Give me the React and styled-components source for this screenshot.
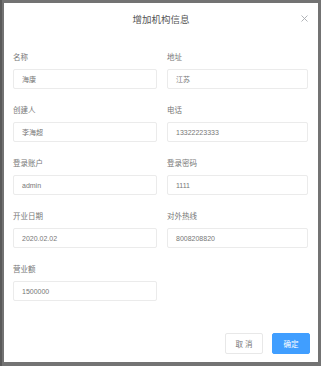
import React from 'react'
import styled, { createGlobalStyle } from 'styled-components'

const fields = [
  { label: '名称', value: '海康' },
  { label: '地址', value: '江苏' },
  { label: '创建人', value: '李海超' },
  { label: '电话', value: '13322223333' },
  { label: '登录账户', value: 'admin' },
  { label: '登录密码', value: '1111' },
  { label: '开业日期', value: '2020.02.02' },
  { label: '对外热线', value: '8008208820' },
  { label: '营业额', value: '1500000' },
]

const App = () => {
  return (
    <Backdrop>
      <GlobalStyle />
      <Dialog>
        <Header>
          <Title>增加机构信息</Title>
          <Close>
            <svg width="7" height="7" viewBox="0 0 7 7">
              <path d="M0.5 0.5 L6.5 6.5 M6.5 0.5 L0.5 6.5" stroke="#a8abb0" strokeWidth="0.9" />
            </svg>
          </Close>
        </Header>

        <Form>
          {fields.map((f) => (
            <Field key={f.label}>
              <Label>{f.label}</Label>
              <Input>{f.value}</Input>
            </Field>
          ))}
        </Form>

        <Footer>
          <Button>取 消</Button>
          <Button primary>确定</Button>
        </Footer>
      </Dialog>
    </Backdrop>
  )
}

export default App

const GlobalStyle = createGlobalStyle`
  html, body {
    margin: 0;
    padding: 0;
    background: #737373;
  }
  body {
    font-family: "Liberation Sans", "Noto Sans CJK SC", sans-serif;
  }
`

const Backdrop = styled.div`
  width: 321px;
  height: 366px;
  background: #737373;
  border-left: 2px solid #5a5a5a;
  box-sizing: border-box;
  padding: 3px 3px 4px 2px;
`

const Dialog = styled.div`
  width: 314px;
  height: 359px;
  background: #fff;
  display: flex;
  flex-direction: column;
  box-sizing: border-box;
`

const Header = styled.div`
  position: relative;
  height: 36px;
  display: flex;
  justify-content: center;
  padding-top: 10px;
  box-sizing: border-box;
`

const Title = styled.div`
  font-size: 9.5px;
  line-height: 14px;
  color: #555;
`

const Close = styled.div`
  position: absolute;
  right: 10px;
  top: 12px;
  width: 7px;
  height: 7px;
  display: flex;
`

const Form = styled.div`
  display: grid;
  grid-template-columns: 144px 141px;
  column-gap: 10px;
  row-gap: 17px;
  padding: 14px 0 0 9px;
`

const Field = styled.div`
  display: flex;
  flex-direction: column;
`

const Label = styled.div`
  font-size: 7.5px;
  line-height: 10px;
  color: #777;
  margin-bottom: 6px;
`

const Input = styled.div`
  height: 20px;
  box-sizing: border-box;
  border: 1px solid #ebebeb;
  border-radius: 2px;
  padding: 0 8px;
  display: flex;
  align-items: center;
  font-size: 7px;
  color: #777;
`

const Footer = styled.div`
  margin-top: auto;
  display: flex;
  justify-content: flex-end;
  gap: 9px;
  padding: 0 8px 8px 0;
`

const Button = styled.div`
  width: 38px;
  height: 21px;
  box-sizing: border-box;
  border-radius: 2px;
  display: flex;
  align-items: center;
  justify-content: center;
  font-size: 7.5px;
  border: 1px solid ${(p) => (p.primary ? '#409eff' : '#e8e8e8')};
  background: ${(p) => (p.primary ? '#409eff' : '#fff')};
  color: ${(p) => (p.primary ? '#fff' : '#777')};
`
